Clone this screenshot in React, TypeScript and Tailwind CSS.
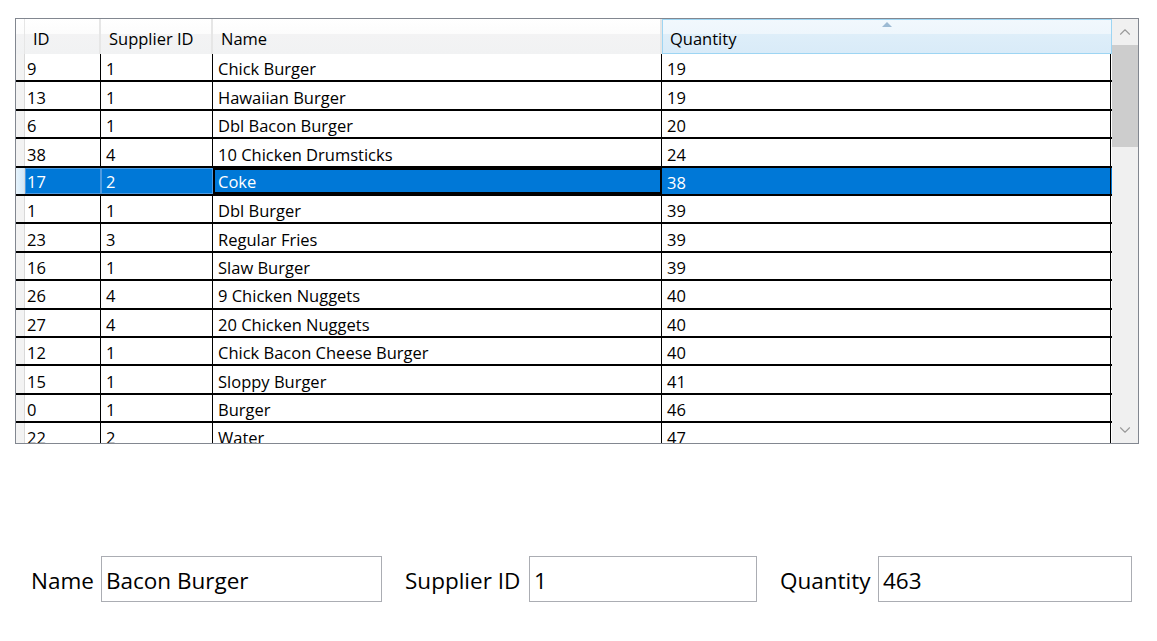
import { ChevronDown, ChevronUp } from 'lucide-react'

interface Product {
  id: number
  supplierId: number
  name: string
  quantity: number
}

const products: Product[] = [
  { id: 9, supplierId: 1, name: 'Chick Burger', quantity: 19 },
  { id: 13, supplierId: 1, name: 'Hawaiian Burger', quantity: 19 },
  { id: 6, supplierId: 1, name: 'Dbl Bacon Burger', quantity: 20 },
  { id: 38, supplierId: 4, name: '10 Chicken Drumsticks', quantity: 24 },
  { id: 17, supplierId: 2, name: 'Coke', quantity: 38 },
  { id: 1, supplierId: 1, name: 'Dbl Burger', quantity: 39 },
  { id: 23, supplierId: 3, name: 'Regular Fries', quantity: 39 },
  { id: 16, supplierId: 1, name: 'Slaw Burger', quantity: 39 },
  { id: 26, supplierId: 4, name: '9 Chicken Nuggets', quantity: 40 },
  { id: 27, supplierId: 4, name: '20 Chicken Nuggets', quantity: 40 },
  { id: 12, supplierId: 1, name: 'Chick Bacon Cheese Burger', quantity: 40 },
  { id: 15, supplierId: 1, name: 'Sloppy Burger', quantity: 41 },
  { id: 0, supplierId: 1, name: 'Burger', quantity: 46 },
  { id: 22, supplierId: 2, name: 'Water', quantity: 47 },
]

const selectedId = 17

const headerBg = 'bg-[linear-gradient(#ffffff_0%,#fcfcfc_42%,#f3f3f4_43%,#f1f2f3_100%)]'

function HeaderCell({ label, width }: { label: string; width: string }) {
  return (
    <div className={`${width} flex h-full items-center border-r-2 border-[#e6e6e6] pl-[8px] pt-[5px] ${headerBg}`}>
      {label}
    </div>
  )
}

function Row({ product }: { product: Product }) {
  const isSelected = product.id === selectedId
  if (isSelected) {
    return (
      <div className="flex h-[28.4px] shrink-0 border-b-2 border-black bg-[#0078d7] text-white">
        <div className="w-[9px] shrink-0 border-r border-[#d9d9d9] bg-[linear-gradient(90deg,#e6f3fc,#d2e8f8)]" />
        <div className="flex w-[76px] shrink-0 items-center border border-[#4d9be2] pl-[1px] pt-[4px]">
          {product.id}
        </div>
        <div className="flex w-[112px] shrink-0 items-center border border-[#4d9be2] pl-[4px] pt-[4px]">
          {product.supplierId}
        </div>
        <div className="flex w-[449px] shrink-0 items-center border-2 border-black pl-[3px] pt-[4px]">
          {product.name}
        </div>
        <div className="flex w-[449px] shrink-0 items-center border-r border-black pl-[5px] pt-[5px]">
          {product.quantity}
        </div>
      </div>
    )
  }
  return (
    <div className="flex h-[28.4px] shrink-0 border-b-2 border-black bg-white">
      <div className="w-[9px] shrink-0 border-r border-[#d9d9d9] bg-[#f3f3f3]" />
      <div className="flex w-[76px] shrink-0 items-center border-r border-black pl-[2px] pt-[5px]">
        {product.id}
      </div>
      <div className="flex w-[112px] shrink-0 items-center border-r border-black pl-[5px] pt-[5px]">
        {product.supplierId}
      </div>
      <div className="flex w-[449px] shrink-0 items-center border-r border-black pl-[5px] pt-[5px]">
        {product.name}
      </div>
      <div className="flex w-[449px] shrink-0 items-center border-r border-black pl-[5px] pt-[5px]">
        {product.quantity}
      </div>
    </div>
  )
}

function Field({ label, labelWidth, boxWidth, value }: { label: string; labelWidth: string; boxWidth: string; value: string }) {
  return (
    <div className="flex items-center">
      <span className={`${labelWidth} shrink-0 pt-[3px]`}>{label}</span>
      <div className={`${boxWidth} flex h-[46px] shrink-0 items-center border border-[#abadb3] bg-white pl-[4px] pt-[3px]`}>
        {value}
      </div>
    </div>
  )
}

function App() {
  return (
    <div className="h-[641px] w-[1157px] overflow-hidden bg-white pl-[15px] pt-[18px] font-['Open_Sans',sans-serif] text-black">
      <div className="flex h-[426px] w-[1124px] border border-[#828790]">
        <div className="flex w-[1096px] flex-col overflow-hidden text-[16.5px]">
          <div className="flex h-[35px] shrink-0">
            <div className={`w-[9px] shrink-0 border-r border-[#e6e6e6] ${headerBg}`} />
            <HeaderCell label="ID" width="w-[76px]" />
            <HeaderCell label="Supplier ID" width="w-[112px]" />
            <HeaderCell label="Name" width="w-[449px]" />
            <div className="relative flex h-full w-[450px] items-center border border-[#9dd5f3] bg-[linear-gradient(#f1f8fd_0%,#eef6fc_42%,#deeef9_43%,#d9ebf8_100%)] pl-[7px] pt-[5px]">
              <span className="absolute left-1/2 top-[2px] h-0 w-0 -translate-x-1/2 border-x-[5px] border-b-[5px] border-x-transparent border-b-[#9cbad3]" />
              Quantity
            </div>
          </div>
          {products.map((product) => (
            <Row key={product.id} product={product} />
          ))}
        </div>
        <div className="flex w-[26px] shrink-0 flex-col bg-[#f0f0f0]">
          <div className="flex h-[26px] items-center justify-center text-[#9a9a9a]">
            <ChevronUp size={18} strokeWidth={1.5} />
          </div>
          <div className="h-[102px] bg-[#cdcdcd]" />
          <div className="flex-1" />
          <div className="flex h-[26px] items-center justify-center text-[#9a9a9a]">
            <ChevronDown size={18} strokeWidth={1.5} />
          </div>
        </div>
      </div>
      <div className="mt-[112px] flex items-center pl-[16px] text-[22.5px]">
        <Field label="Name" labelWidth="w-[70px]" boxWidth="w-[281px]" value="Bacon Burger" />
        <div className="w-[23px]" />
        <Field label="Supplier ID" labelWidth="w-[124px]" boxWidth="w-[228px]" value="1" />
        <div className="w-[23px]" />
        <Field label="Quantity" labelWidth="w-[98px]" boxWidth="w-[254px]" value="463" />
      </div>
    </div>
  )
}

export default App
